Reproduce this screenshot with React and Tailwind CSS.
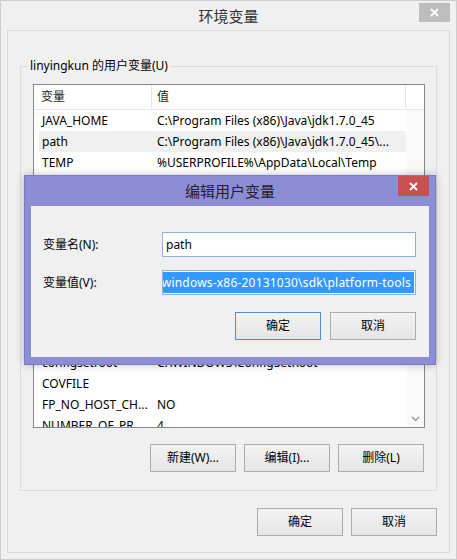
import React from "react";

const topRows = [
  { name: "JAVA_HOME", value: "C:\\Program Files (x86)\\Java\\jdk1.7.0_45" },
  {
    name: "path",
    value: "C:\\Program Files (x86)\\Java\\jdk1.7.0_45\\...",
    selected: true,
  },
  { name: "TEMP", value: "%USERPROFILE%\\AppData\\Local\\Temp" },
];

const bottomRows = [
  { name: "configsetroot", value: "C:\\WINDOWS\\ConfigSetRoot" },
  { name: "COVFILE", value: "" },
  { name: "FP_NO_HOST_CH...", value: "NO" },
  { name: "NUMBER_OF_PR...", value: "4" },
];

const Row = ({ row }) => (
  <div
    className={
      row.selected
        ? "flex h-[21px] items-center ml-[5px] w-[367px] bg-[#f0f0f0] shrink-0"
        : "flex h-[21px] items-center ml-[5px] w-[367px] shrink-0"
    }
  >
    <div className="w-[113px] pl-[3px] whitespace-nowrap overflow-hidden">
      {row.name}
    </div>
    <div className="flex-1 pl-[5px] whitespace-nowrap overflow-hidden">
      {row.value}
    </div>
  </div>
);

const Cross = () => (
  <svg width="9" height="9" viewBox="0 0 9 9">
    <path d="M1 1L8 8M8 1L1 8" stroke="#fff" strokeWidth="1.8" />
  </svg>
);

const WinButton = ({ children, primary }) => (
  <button
    className={
      primary
        ? "w-[86px] h-[28px] border border-[#4a90d9] bg-gradient-to-b from-[#f2f2f2] to-[#e5e5e5] text-[12px] text-black"
        : "w-[86px] h-[28px] border border-[#acacac] bg-gradient-to-b from-[#f2f2f2] to-[#e5e5e5] text-[12px] text-black"
    }
  >
    {children}
  </button>
);

export default function App() {
  return (
    <div className="relative w-[457px] h-[560px] bg-[#f0f0f0] border border-[#cdcdcd] flex flex-col text-[12px] leading-[16px] text-black font-['Noto_Sans','Noto_Sans_CJK_SC',sans-serif]">
      {/* title bar */}
      <div className="relative h-[29px] flex items-center justify-center">
        <span className="text-[15px] text-[#333]">环境变量</span>
        <div className="absolute right-[6px] top-[2px] w-[31px] h-[19px] bg-[#bdbdbd] flex items-center justify-center">
          <Cross />
        </div>
      </div>

      {/* client */}
      <div className="flex-1 mx-[6px] mb-[6px] border border-[#d9d9d9] flex flex-col">
        <fieldset className="mt-[27px] mx-[12px] border border-[#dcdcdc]">
          <legend className="ml-[7px] px-[2px] leading-[16px]">
            linyingkun 的用户变量(U)
          </legend>

          <div className="mt-[10px] ml-[12px] w-[392px] h-[344px] border border-[#828790] bg-white flex flex-col">
            {/* header */}
            <div className="flex h-[25px] shrink-0 border-b border-[#e3e8ef] text-[#1e1e1e]">
              <div className="w-[118px] pl-[7px] border-r border-[#e5e5e5] flex items-center">
                变量
              </div>
              <div className="w-[254px] pl-[5px] border-r border-[#e5e5e5] flex items-center">
                值
              </div>
              <div className="flex-1" />
            </div>

            {/* body */}
            <div className="flex-1 flex overflow-hidden">
              <div className="flex-1 flex flex-col overflow-hidden">
                {topRows.map((r) => (
                  <Row key={r.name} row={r} />
                ))}
                {/* rows covered by the edit dialog */}
                <div className="h-[179px] shrink-0" />
                {bottomRows.map((r) => (
                  <Row key={r.name} row={r} />
                ))}
              </div>
              <div className="w-[17px] bg-[#f9f9f9] flex flex-col justify-end">
                <div className="h-[17px] flex items-center justify-center">
                  <svg width="9" height="6" viewBox="0 0 9 6">
                    <path
                      d="M1 1L4.5 4.5L8 1"
                      fill="none"
                      stroke="#9a9a9a"
                      strokeWidth="1.4"
                    />
                  </svg>
                </div>
              </div>
            </div>
          </div>

          <div className="mt-[16px] mb-[18px] pr-[12px] flex justify-end gap-[8px]">
            <WinButton>新建(W)...</WinButton>
            <WinButton>编辑(I)...</WinButton>
            <WinButton>删除(L)</WinButton>
          </div>
        </fieldset>

        <div className="mt-[17px] pr-[12px] flex justify-end gap-[8px]">
          <WinButton>确定</WinButton>
          <WinButton>取消</WinButton>
        </div>
      </div>

      {/* edit dialog */}
      <div className="absolute left-[23px] top-[174px] w-[412px] h-[190px] bg-[#8d8dd5] border border-[#7b7bc4] flex flex-col shadow-[0_0_8px_rgba(0,0,0,0.25)]">
        <div className="relative h-[30px] shrink-0 flex items-center justify-center">
          <span className="text-[15px] text-[#222]">编辑用户变量</span>
          <div className="absolute right-[6px] top-0 w-[31px] h-[20px] bg-[#c75050] flex items-center justify-center">
            <Cross />
          </div>
        </div>

        <div className="mx-[6px] h-[151px] bg-[#f0f0f0] pl-[12px] pr-[13px] pt-[26px]">
          <div className="flex items-center h-[25px]">
            <div className="w-[119px]">变量名(N):</div>
            <div className="flex-1 h-[25px] border border-[#8fb1dc] bg-white flex items-center pl-[3px]">
              path
            </div>
          </div>
          <div className="flex items-center h-[25px] mt-[13px]">
            <div className="w-[119px]">变量值(V):</div>
            <div className="flex-1 h-[25px] border border-[#8fb1dc] bg-white p-[1px] flex justify-end overflow-hidden">
              <span className="bg-[#3399ff] text-white whitespace-nowrap pr-[3px] tracking-[0.2px] flex items-center">
                C:\adt-bundle-windows-x86-20131030\sdk\platform-tools
              </span>
            </div>
          </div>
          <div className="mt-[17px] flex justify-end gap-[9px]">
            <WinButton primary>确定</WinButton>
            <WinButton>取消</WinButton>
          </div>
        </div>
      </div>
    </div>
  );
}
